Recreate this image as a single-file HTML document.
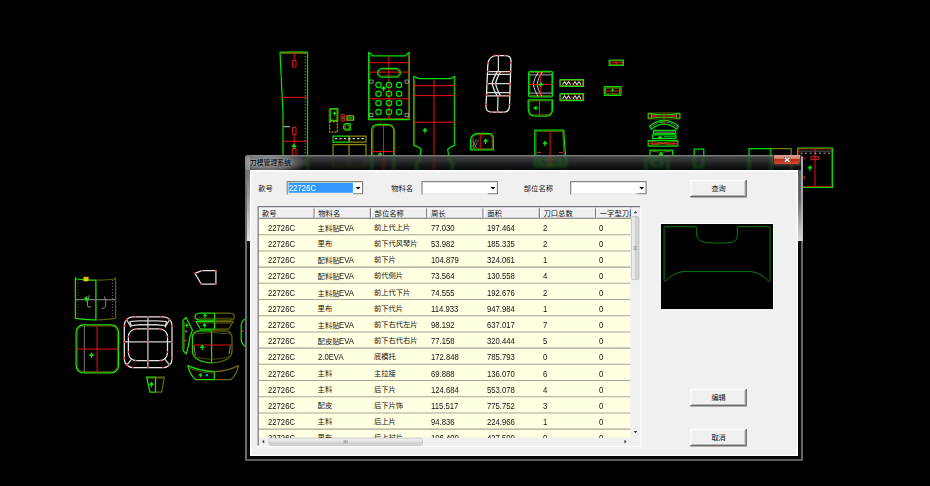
<!DOCTYPE html>
<html lang="zh-CN"><head><meta charset="utf-8"><title>刀模管理系统</title>
<style>
html,body{margin:0;padding:0;background:#000;}
body{width:930px;height:486px;overflow:hidden;position:relative;font-family:"Liberation Sans","Noto Sans CJK SC",sans-serif;font-size:7.3px;color:#111;}
i{font-style:normal;font-size:8.4px;display:inline-block;transform:scaleX(.92);transform-origin:0 50%;}
#cad{position:absolute;left:0;top:0;}
#frame{position:absolute;left:245.0px;top:155.0px;width:558.20px;height:306.00px;border-radius:3px 3px 1px 1px;overflow:hidden;background:#08080a;}
#glass{position:absolute;left:0;top:0;right:0;bottom:0;background:linear-gradient(to bottom,#8e9092 0,#6a6c6e 1px,#3c3e40 2px,#2c2d2f 6px,#141516 11px,#0a0a0b 15px) left top/100% 15px no-repeat;}
#glass b{position:absolute;display:block;}
#g1{left:0;top:1px;bottom:0;width:1.9px;background:#6a6e72;}
#g2{left:1.9px;top:2px;width:3.1px;height:84px;background:linear-gradient(to bottom,#7e8286 0,#74787c 18%,#e2e2e2 100%);}
#g3{right:2.2px;top:15px;width:2.8px;height:71px;background:linear-gradient(to bottom,#5a5e62 0,#62666a 40%,#dcdcdc 100%);}
#g4{right:0;top:2px;width:2.2px;height:84px;background:linear-gradient(to bottom,#a4a8ac 0,#a0a4a8 50%,#d0d0d0 100%);}
#g5{right:0;top:86px;bottom:0;width:2.2px;background:#62666a;}
#g6{left:0;right:0;bottom:0;height:1.9px;background:#5c5e62;}
#rsv{position:absolute;left:0;top:0;}
#refl{position:absolute;left:0;top:0;width:80px;height:15px;background:radial-gradient(ellipse 42px 12px at 22px 8px,rgba(176,180,184,.85),rgba(160,164,168,.6) 55%,rgba(120,120,125,0) 100%);}
#ttl{position:absolute;left:4.8px;top:2.7px;font-size:6.9px;line-height:9px;color:#000;font-weight:500;text-shadow:0 0 2px rgba(230,232,236,.8);white-space:nowrap;}
#cls{position:absolute;left:528px;top:0;width:25.6px;height:9.3px;border-radius:0 0 3px 3px;border:0.6px solid #4a2a28;border-top:none;
 background:linear-gradient(to bottom,#dda79b 0,#cc7464 45%,#b92d14 50%,#c8513a 100%);box-shadow:0 0 2px rgba(255,255,255,.35);}
#cls svg{position:absolute;left:10.4px;top:1.9px;}
#client{position:absolute;left:5.00px;top:15.00px;width:548.20px;height:286.40px;background:#f0f0f0;box-shadow:inset 1.4px 1.4px 0 #fff,inset -1.4px -1.4px 0 #fff;}
.lb{position:absolute;top:13.6px;line-height:10px;white-space:nowrap;}
#csv{position:absolute;left:0;top:0;}
.ct{position:absolute;top:12.9px;line-height:11.4px;color:#fff;white-space:nowrap;}
.btn{position:absolute;left:440.3px;width:56.6px;height:17.5px;text-align:center;line-height:17.6px;font-size:7.2px;}
#pv{position:absolute;width:112.2px;height:85.7px;background:#000;box-shadow:0 -1px 0 #fff,1px 0 0 #fff;}
#pv svg{position:absolute;left:0;top:0;}
#lv{position:absolute;left:7px;top:36px;width:386px;height:242px;overflow:hidden;}
#lsv{position:absolute;left:0;top:0;}
#hd{position:absolute;left:0;top:2.6px;width:374px;height:10.4px;overflow:hidden;}
.hc{position:absolute;top:0;height:10.4px;line-height:10.6px;white-space:nowrap;overflow:hidden;}
#rows{position:absolute;left:1.8px;top:13px;width:371.5px;height:218.5px;overflow:hidden;}
.r{position:absolute;left:0;width:100%;height:16.2px;}
.r span{position:absolute;top:4px;line-height:10px;white-space:nowrap;}
</style></head>
<body>
<svg id="cad" width="930" height="486" viewBox="0 0 930 486" fill="none" stroke-width="1.25" stroke-linejoin="round">
<defs><path id="a" d="M0 -3 L2.6 0.6 H0.6 V2.7 H-0.6 V0.6 H-2.6 Z" fill="#00e800" stroke="none"/></defs>
<!-- tall strip -->
<g>
<path d="M280 52 H307.5 V160 H283 V114 Z" stroke="#00e000"/>
<path d="M281.2 53 H306.4" stroke="#8a8a00"/>
<path d="M281.6 97.3 H307.5 M283 141.2 H307.5 M294.2 52 V60.5 M294.2 134.5 V148 M281.6 70 V78 M283.2 120 V127" stroke="#f01010" stroke-width="1"/>
<rect x="292.6" y="60.5" width="3.4" height="6.6" stroke="#f01010" stroke-width="1"/><rect x="292.6" y="127.5" width="3.4" height="7" stroke="#f01010" stroke-width="1"/><rect x="292.6" y="148.5" width="3.4" height="8" stroke="#f01010" stroke-width="1"/>
<path d="M283.4 126.6 H290" stroke="#aaa"/>
<path d="M305.2 53 V156" stroke="#9a9a9a" stroke-width=".8" stroke-dasharray="1.4 1.6"/>
<use href="#a" x="294" y="146.4"/>
</g>
<!-- small group -->
<g>
<rect x="330.2" y="108.6" width="7.6" height="11.8" stroke="#00e000"/><rect x="329.2" y="109.6" width="7.6" height="11.6" stroke="#8a8a00" stroke-width=".8"/>
<use href="#a" x="334.6" y="113.6" transform="translate(334.6 113.6) scale(.75) translate(-334.6 -113.6)"/>
<rect x="329.6" y="121.6" width="7.8" height="10.6" stroke="#9a9a30" stroke-dasharray="2 1.2"/>
<rect x="341" y="114.6" width="3.4" height="6.4" stroke="#f01010" stroke-width="1"/><rect x="342" y="116.6" width="1.4" height="2.4" stroke="#8a8a00" stroke-width=".7"/>
<rect x="347" y="115.8" width="6.6" height="4.4" stroke="#a0b000"/><path d="M348 118 H352.6" stroke="#00e000"/>
<path d="M350.2 123.6 H345.4 Q341.4 127 345.4 130.2 H350.2 Z" stroke="#00e000"/><path d="M349 125 H346 Q343.6 127 346 129 H349 Z" stroke="#a0a000" stroke-width=".8"/>
<rect x="333" y="136" width="16" height="6" stroke="#00e000"/><rect x="349" y="136" width="17" height="6" stroke="#8a8a00"/>
<path d="M335 138.6 H364" stroke="#ccc" stroke-dasharray="2.4 2"/>
<path d="M333 160 V144.6 H366 V160 M349 144.6 V160" stroke="#8a8a00"/>
</g>
<!-- keypad piece -->
<g>
<path d="M368.6 52.3 L372.6 55.8 H405.4 L409.2 52.3 V119.5 H368.6 Z" stroke="#00e000"/>
<path d="M369.6 54.5 V118.5 H408.4 V54.5" stroke="#7a7a00" stroke-width=".7"/>
<path d="M368.6 62.7 H409.4 M368.6 72.1 H409.4 M368.6 98.8 H409.4 M388.9 56 V119.5" stroke="#f01010" stroke-width="1"/>
<path d="M381 68.4 H397 L400.2 71 V74.6 L397 77.2 H381 L377.8 74.6 V71 Z" stroke="#00e000" stroke-width="1.2"/>
<path d="M381.4 69.6 H396.6 L399 71.4 V74.2 L396.6 76 H381.4 L379 74.2 V71.4 Z" stroke="#8a8a00" stroke-width=".6"/>
<g stroke="#00e000">
<circle cx="378.5" cy="85" r="2.7"/><circle cx="388.9" cy="85" r="2.7"/><circle cx="399" cy="85" r="2.7"/>
<circle cx="378.5" cy="93.7" r="2.7"/><circle cx="388.9" cy="93.7" r="2.7"/><circle cx="399" cy="93.7" r="2.7"/>
<circle cx="378.5" cy="103" r="2.7"/><circle cx="388.9" cy="103" r="2.7"/><circle cx="399" cy="103" r="2.7"/>
<circle cx="378.5" cy="112.1" r="2.7"/><circle cx="388.9" cy="112.1" r="2.7"/><circle cx="399" cy="112.1" r="2.7"/>
</g>
<g stroke="#b0b0b0" stroke-width=".8"><rect x="369.6" y="80" width="3.4" height="3.2"/><rect x="405" y="80" width="3.4" height="3.2"/><rect x="369.6" y="113.4" width="3.4" height="3.2"/><rect x="405" y="113.4" width="3.4" height="3.2"/></g>
<use href="#a" x="383.6" y="88.6"/>
</g>
<!-- arch -->
<g>
<path d="M371.6 160 V131 Q371.6 124.4 378.2 124.4 H387.4 Q393.8 124.4 393.8 131 V160" stroke="#00e000"/>
<path d="M372.8 160 V131.4 Q372.8 125.6 378.4 125.6 H388.4 Q394.8 125.6 394.8 132 V160" stroke="#8a8a00" stroke-width=".8"/>
<path d="M383.5 124.4 V160 M371.6 151.6 H393.8" stroke="#f01010" stroke-width="1"/>
<use href="#a" x="380" y="155"/>
</g>
<!-- tall piece with feet -->
<g>
<path d="M420.6 160 Q420 151 421.4 149.8 Q419 146.6 413.8 145.4 V76.4 L418.6 78.5 H450.4 L454.7 76.4 V145.4 Q449.8 146.6 447.4 149.8 Q448.8 151 448.2 160" stroke="#00e000"/>
<path d="M414.8 79.6 V144.6 M454 79.6 V144.6" stroke="#7a7a00" stroke-width=".7"/>
<path d="M413.8 85.7 H455 M413.8 95.6 H455 M413.8 122.2 H455 M434 79.3 V160" stroke="#f01010" stroke-width="1"/>
<use href="#a" x="425" y="130.6"/>
</g>
<!-- white rounded piece -->
<g stroke="#f4f4f4">
<path d="M497 55.5 H505.4 Q511.2 55.5 511 61.4 L509.5 106 Q509.3 112.1 503.5 112.1 H492 Q485.8 112.1 486 106 L487.8 65 Q488.4 55.8 497 55.5 Z"/>
<path d="M487.7 71.6 H510.8 M487.6 74.4 H510.7 M487.2 83.5 H510.3 M486.8 92.6 H510 M486.7 95.8 H509.9 M498.4 55.5 V71.6 M498 95.8 L497.6 112.1" stroke="#d8d8d8"/>
<path d="M497.4 71.6 Q493 78.5 492.2 83.6 Q493 88.5 497.2 95.8 M500.6 71.6 Q496.4 78.5 495.6 83.6 Q496.4 88.5 500.4 95.8" stroke="#e8e8e8"/>
</g>
<g fill="#ff2020" stroke="none">
<circle cx="498.6" cy="55.3" r=".9"/><circle cx="505" cy="55.4" r=".9"/><circle cx="494" cy="55.4" r=".9"/><circle cx="488.1" cy="63" r=".9"/><circle cx="511" cy="63" r=".9"/>
<circle cx="487.9" cy="71.6" r=".9"/><circle cx="510.7" cy="71.6" r=".9"/><circle cx="487.4" cy="84" r=".9"/><circle cx="510.3" cy="84" r=".9"/><circle cx="486.9" cy="95" r=".9"/><circle cx="510" cy="95" r=".9"/>
<circle cx="486.2" cy="104.6" r=".9"/><circle cx="509.5" cy="104.6" r=".9"/><circle cx="492" cy="112" r=".9"/><circle cx="497.2" cy="112" r=".9"/><circle cx="503.6" cy="112" r=".9"/>
<circle cx="499.2" cy="72.8" r=".8"/><circle cx="503" cy="72.8" r=".8"/><circle cx="499" cy="96.3" r=".8"/><circle cx="502.6" cy="96.3" r=".8"/><circle cx="495" cy="84" r=".8"/>
</g>
<!-- E chevron -->
<g>
<rect x="528.6" y="71.4" width="24" height="25.4" rx="1.5" stroke="#00e000"/><rect x="529.8" y="72.6" width="21.6" height="23" rx="1" stroke="#8a8a00" stroke-width=".7"/>
<path d="M529 74.8 H552 M529 93.2 H552" stroke="#888"/>
<path d="M538.2 72 Q534 79 533.2 84.4 Q534 89.5 538 96.4 M542 72 Q537.8 79 537 84.4 Q537.8 89.5 541.8 96.4" stroke="#d8d8d8" stroke-width=".9"/>
<path d="M528.6 84.4 H552.6 M540.2 71.4 V96.8" stroke="#f01010" stroke-width="1"/>
<use href="#a" x="0" y="0" transform="translate(541 84.4) rotate(-90)"/>
</g>
<!-- F -->
<g>
<path d="M528.2 99.8 H552.6 V109 Q552.6 116 546 116 H534.8 Q528.2 116 528.2 109 Z" stroke="#00e000"/>
<path d="M529.3 100.9 H551.5 V109 Q551.5 114.9 546 114.9 H534.8 Q529.3 114.9 529.3 109 Z" stroke="#8a8a00" stroke-width=".7"/>
<path d="M539.5 99.8 V116" stroke="#f01010" stroke-width="1"/><use href="#a" x="0" y="0" transform="translate(536 108) rotate(-90)"/>
</g>
<!-- G hatch rects -->
<g>
<rect x="560" y="79.5" width="23.5" height="6.9" stroke="#30d020"/><rect x="560" y="93.6" width="23.5" height="6.9" stroke="#30d020"/>
<rect x="560.9" y="80.4" width="21.7" height="5.1" stroke="#9a9a00" stroke-width=".6"/><rect x="560.9" y="94.5" width="21.7" height="5.1" stroke="#9a9a00" stroke-width=".6"/>
<path d="M562.5 84.8 L564.5 81.6 L566.5 84.8 L568.5 81.6 L570.5 84.8 M573 84.8 L575 81.6 L577 84.8 L579 81.6 L581 84.8 M562.5 98.9 L564.5 95.7 L566.5 98.9 L568.5 95.7 L570.5 98.9 M573 98.9 L575 95.7 L577 98.9 L579 95.7 L581 98.9" stroke="#d0d0d0" stroke-width="1.1"/>
<path d="M570.5 83 H573.5 M570.5 97.1 H573.5" stroke="#ff4040" stroke-width=".8"/>
</g>
<!-- H dome -->
<g>
<path d="M470.4 149.9 V142 Q470.4 133.3 479 133.3 H488 Q493.3 133.3 493.3 138.6 V149.9 Z" stroke="#00e000"/>
<path d="M471.6 148.8 V142 Q471.6 134.5 479 134.5 H488 Q492.2 134.5 492.2 138.6 V148.8 Z" stroke="#8a8a00" stroke-width=".7"/>
<path d="M472.4 147 L476.4 139 M474.4 148 L478.4 140 M472.6 141 L476.6 148" stroke="#999" stroke-width=".7"/>
<path d="M480.2 133.3 V149.9" stroke="#f01010" stroke-width="1"/><path d="M473.4 138.5 V149" stroke="#ff3030" stroke-width=".7"/><use href="#a" x="485.6" y="141.2"/>
</g>
<!-- I trapezoid -->
<g>
<path d="M534.8 130.1 H563.7 L565.8 160 H534.8 Z" stroke="#00e000"/><path d="M536 131.3 H562.6 L564.6 160 M536 131.3 V160" stroke="#8a8a00" stroke-width=".7"/>
<path d="M550.1 130.1 V160" stroke="#f01010" stroke-width="1"/><use href="#a" x="545" y="143.6"/>
<path d="M537 152.4 H541 M559 152.4 H563" stroke="#ff4040" stroke-width=".8"/>
</g>
<!-- J K -->
<g>
<rect x="609.2" y="60.2" width="14.1" height="5.2" stroke="#00e000"/><rect x="610.2" y="61.1" width="12.1" height="3.4" stroke="#8a8a00" stroke-width=".6"/><path d="M609.2 62.8 H623.3 M616.2 60.2 V65.4" stroke="#ff2020" stroke-width=".8"/>
<rect x="604.3" y="86.7" width="16.7" height="8.6" stroke="#00e000"/><rect x="605.6" y="88" width="14.1" height="6" stroke="#b0b000" stroke-width=".8"/><path d="M604.3 91 H621" stroke="#ff2020" stroke-width=".9"/>
<use href="#a" x="612.6" y="90.4" transform="translate(612.6 90.4) scale(.7) translate(-612.6 -90.4)"/>
</g>
<!-- L stack -->
<g>
<path d="M648.2 113.4 Q664 116.4 679.9 113.4 V118.6 Q664 115.6 648.2 118.6 Z" stroke="#00e000"/><rect x="648.8" y="113" width="30.5" height="6" stroke="#7a8a00" stroke-width=".7"/>
<path d="M650.6 114.2 Q664 116.8 677.4 114.2 V117.8 Q664 115.2 650.6 117.8 Z" fill="#b81414" stroke="none"/><path d="M664 113 V119" stroke="#ff2020" stroke-width=".8"/><path d="M651.4 113.8 V118.2 M676.6 113.8 V118.2" stroke="#c8a0a0" stroke-width=".7"/>
<path d="M649.6 126 Q664 114.6 678.5 126 L676.8 129.3 Q664 119.1 651.3 129.3 Z" stroke="#00e000"/><path d="M651 126.8 Q664 116.6 677 126.8" stroke="#8a7090" stroke-width=".8"/><path d="M658 122.2 L662.6 120.8 V123.4 Z" fill="#00c000" stroke="none"/>
<path d="M664 120.3 V124.2" stroke="#ff2020"/>
<rect x="653.4" y="130.4" width="22.2" height="3.2" stroke="#00e000"/><path d="M654.4 132 H674.6" stroke="#d0d0d0" stroke-width=".7"/>
<rect x="652.6" y="134.8" width="23.4" height="3.9" stroke="#00e000"/><path d="M657 138.2 L660 135.4 L663 138.2 Z" fill="#00e000" stroke="none"/><path d="M664 136.8 H675" stroke="#00c000"/>
<rect x="648.2" y="140.5" width="29.5" height="5.7" stroke="#00e000"/><path d="M649.2 141.4 Q663 144.4 676.7 141.4 M649.2 145.3 Q663 142.3 676.7 145.3" stroke="#9a9a00" stroke-width=".7"/><path d="M648.2 143.4 H677.7 M652 140.8 V146 M674 140.8 V146" stroke="#ff2020" stroke-width=".8"/>
<path d="M650 160 V150 H672.6 V160" stroke="#00e000"/><path d="M651 151 Q661 153.6 671.6 151" stroke="#9a9a00" stroke-width=".7"/><use href="#a" x="661" y="154.6"/>
<path d="M694.2 160 V149.2 H703.8 V160" stroke="#00e000"/>
</g>
<!-- right rects -->
<g>
<path d="M749 160 V148.6 H770.9 V160" stroke="#00e000"/><path d="M770.9 148.6 H791.2 V160" stroke="#7a7a00"/>
<rect x="797.8" y="148" width="34.7" height="39.3" stroke="#00e000"/><rect x="798.7" y="148.9" width="32.9" height="37.5" stroke="#ff1010" stroke-width=".7"/><path d="M799 151.1 H831.5" stroke="#999" stroke-width=".6"/>
<path d="M815 148 V187.3" stroke="#f01010" stroke-width="1"/><path d="M800.5 153.2 H831" stroke="#e0e0e0" stroke-dasharray="2 2.6" stroke-width=".8"/>
<rect x="810.8" y="156.8" width="8.2" height="2.6" stroke="#ff3030" stroke-width=".8"/><path d="M804.2 156.6 V159.6 M804.2 176 V179.6" stroke="#ff3030" stroke-width=".8"/>
<use href="#a" x="810" y="168"/>
</g>
<!-- M -->
<g>
<path d="M95.9 280 Q86 280.4 76.4 279 L75.4 277.8 V318.4 Q86 320 95.9 319.8 Z" stroke="#20e000"/>
<path d="M95.9 280 Q106 280.4 114.6 279 L115.6 277.8 V318.4 Q106 320 95.9 319.8" stroke="#5c5c00"/>
<path d="M77.8 280 V318" stroke="#e03030" stroke-dasharray=".8 2.2" stroke-width=".9"/><path d="M112.6 280 V318" stroke="#888" stroke-dasharray=".8 2.2" stroke-width=".9"/>
<path d="M76 299.6 H115" stroke="#777"/>
<path d="M89.2 296.4 Q87 301 87.4 305.8 Q88 307.6 90.2 307.4 M104.4 296.4 Q106.6 301 105.6 306.6 Q104.6 308.6 101.8 308.4" stroke="#999" stroke-width=".9"/>
<circle cx="89" cy="296" r=".8" fill="#ff3030"/><circle cx="90" cy="306.4" r=".8" fill="#ff3030"/>
<rect x="83.8" y="277.2" width="4.4" height="3.8" fill="#e8c000" stroke="#f0d800" stroke-width=".6"/>
<use href="#a" x="86.2" y="299"/>
</g>
<!-- N -->
<g>
<rect x="76.1" y="324.8" width="42.5" height="48.1" rx="7.5" stroke="#20e000"/><rect x="77.3" y="326" width="40.1" height="45.7" rx="6.5" stroke="#7a7a00" stroke-width=".7"/>
<path d="M84.3 325.6 V372.2" stroke="#999" stroke-width=".8"/>
<path d="M97.1 324.8 V372.9 M76.1 349 H118.6" stroke="#f01010" stroke-width="1"/>
<use href="#a" x="91.6" y="355.4"/>
</g>
<!-- O -->
<g stroke="#e8e8e8">
<rect x="124.3" y="316.9" width="47.7" height="50.6" rx="8.5"/>
<rect x="128.4" y="328.8" width="39.1" height="31.9" rx="8"/>
<path d="M129.6 321.6 Q148 319.6 166.8 321.6 M131.2 325.6 Q148 323.4 165.2 325.6 M147.9 316.9 V367.5 M124.3 341.8 H172 M126.4 319.4 L131.2 327.4 M169.8 319.4 L165 327.4 M126.8 365 L132 358.6 M169.6 365 L164.4 358.6 M129.6 321.6 L131.2 325.6 M166.8 321.6 L165.2 325.6" stroke="#cfcfcf"/>
</g>
<g fill="#ff2020" stroke="none">
<circle cx="147.9" cy="316.9" r=".9"/><circle cx="135" cy="317" r=".9"/><circle cx="161" cy="317" r=".9"/><circle cx="124.4" cy="326" r=".9"/><circle cx="172" cy="326" r=".9"/><circle cx="124.3" cy="341.8" r=".9"/><circle cx="172" cy="341.8" r=".9"/>
<circle cx="124.4" cy="358" r=".9"/><circle cx="172" cy="358" r=".9"/><circle cx="133" cy="367.4" r=".9"/><circle cx="147.9" cy="367.5" r=".9"/><circle cx="163" cy="367.4" r=".9"/>
<circle cx="128.5" cy="336.6" r=".9"/><circle cx="167.4" cy="336.6" r=".9"/><circle cx="136" cy="328.9" r=".9"/><circle cx="160" cy="328.9" r=".9"/><circle cx="147.9" cy="328.8" r=".9"/><circle cx="147.9" cy="360.7" r=".9"/><circle cx="135.6" cy="360.6" r=".9"/><circle cx="160.4" cy="360.6" r=".9"/>
<circle cx="128.5" cy="352" r=".9"/><circle cx="167.4" cy="352" r=".9"/><circle cx="147.9" cy="341.8" r=".9"/><circle cx="126.6" cy="319.6" r=".9"/><circle cx="169.6" cy="319.6" r=".9"/><circle cx="127" cy="365" r=".9"/><circle cx="169.4" cy="365" r=".9"/>
</g>
<!-- P -->
<g>
<path d="M155.5 377 H146.6 L150 392.2 H155.5 Z" stroke="#20e000"/><path d="M155.5 377 H164.4 L161.6 392.2 H155.5" stroke="#6a6a00"/>
<path d="M147.8 378.2 H163.2" stroke="#7a7a00" stroke-width=".7"/><use href="#a" x="151.4" y="384.6"/>
</g>
<!-- Q -->
<g>
<path d="M195 273.4 L201.7 270.7 H215.9 V284 H201.2 Z" stroke="#e4e4e4"/>
<g fill="#ff2020" stroke="none"><circle cx="195" cy="273.4" r=".9"/><circle cx="201.7" cy="270.7" r=".9"/><circle cx="215.9" cy="270.7" r=".9"/><circle cx="215.9" cy="284" r=".9"/><circle cx="201.2" cy="284" r=".9"/></g>
</g>
<!-- R group -->
<g>
<path d="M214.6 313 H200 Q195 313.4 195 316.6 Q195 320 200 320.2 H214.6 Z" stroke="#20e000"/><path d="M214.6 313 H229.4 Q234.4 313.4 234.4 316.6 Q234.4 320 229.4 320.2 H214.6" stroke="#6a6a00"/>
<path d="M197 318.2 H232" stroke="#7a7a00" stroke-width=".7"/><use href="#a" x="205" y="315.8" transform="translate(205 315.8) scale(.85) translate(-205 -315.8)"/>
<path d="M214.6 321.5 H195.9 L200.4 329 H214.6 Z" stroke="#20e000"/><path d="M214.6 321.5 H233.3 L228.6 329 H214.6" stroke="#6a6a00"/>
<path d="M198 323 H231" stroke="#7a7a00" stroke-width=".7"/><use href="#a" x="204.4" y="325.4" transform="translate(204.4 325.4) scale(.85) translate(-204.4 -325.4)"/>
<path d="M211.6 330.9 H199 Q192.4 331.5 192.4 338 V352 Q193.4 361.4 211.6 363 Z" stroke="#20e000"/><path d="M211.6 330.9 H225.4 Q232 331.5 232 338 V352 Q231 361.4 211.6 363" stroke="#6a6a00"/>
<path d="M194 334 Q212 331 230.4 334 M195 356.6 Q212 362 229 356.6" stroke="#6a6a00" stroke-width=".7"/>
<path d="M192.4 345 H232" stroke="#f01010" stroke-width="1"/><path d="M194 345.6 L195.2 354.4 M230.4 345.6 L229 354.4" stroke="#aaa" stroke-width=".8"/>
<circle cx="195.2" cy="354.6" r=".8" fill="#ff3030"/><use href="#a" x="202.2" y="347.4"/>
<path d="M183 320.4 L186 317.5 L192.4 330 Q189 338 188.6 345 L186.2 354 L183 350.4 Z" stroke="#20e000"/><path d="M184.4 321.6 V349.6" stroke="#7a7a00" stroke-width=".7"/>
<path d="M183 340.6 H187" stroke="#ff3030" stroke-width=".8"/>
<use href="#a" x="186.8" y="325.6" transform="translate(186.8 325.6) scale(.8) translate(-186.8 -325.6)"/><circle cx="186" cy="331.6" r="1" fill="#00d8d8"/>
<path d="M214.3 371.6 Q200 371 187.8 365.6 Q190 375 195.4 379.5 H214.3 Z" stroke="#20e000"/><path d="M214.3 371.6 Q228 371 238.6 365.6 Q236.4 375 231 379.5 H214.3" stroke="#6a6a00"/>
<path d="M189.8 368.4 Q201 373 213 373.2" stroke="#7a7a00" stroke-width=".7"/>
<use href="#a" x="200.4" y="375.2" transform="translate(200.4 375.2) scale(.85) translate(-200.4 -375.2)"/><circle cx="206.8" cy="375.2" r="1.1" fill="#00d8d8"/>
<circle cx="198" cy="379.4" r=".8" fill="#ff3030"/>
<path d="M248 318 Q241.6 319.6 241.2 325 V340 Q241.6 345.4 248 347.4" stroke="#20e000"/><path d="M241.2 331 H243.6" stroke="#ff3030"/>
</g>
</svg>
<div id="frame"><div id="glass"><b id="g1"></b><b id="g2"></b><b id="g3"></b><b id="g4"></b><b id="g5"></b><b id="g6"></b></div><svg id="rsv" width="558.2" height="15" viewBox="245 155 558.2 15" fill="none"><defs><filter id="bl" x="-5%" y="-50%" width="110%" height="200%"><feGaussianBlur stdDeviation="1.4"/></filter></defs><g filter="url(#bl)" opacity=".36" stroke-width="1.7"><path d="M333 155 V166 H366 V155 M349 155 V166" stroke="#6a6a00" opacity=".6"/><path d="M307.5 155 V171" stroke="#18d018" opacity=".8"/><path d="M371.6 155 V171 M393.8 155 V171 M420.6 155 Q420 160 417 163 Q415 166 418 171 M448.2 155 Q449 160 452 163 Q454 166 451 171 M534.8 155 V166.5 H565.8 V155 M539 159 H561 V164 H539 Z M646 171 V157 H668 V171 M652 160 H662 V166 H652 Z M694.2 155 V167 H703 V155 M749 155 V171 M770.9 155 V171" stroke="#18d018"/><path d="M383.5 155 V171 M434 155 V171 M550.1 155 V166" stroke="#e01818"/><path d="M791.2 155 V171" stroke="#8a8a00"/></g></svg><div id="refl"></div><div id="ttl">刀模管理系统</div><div id="cls"><svg width="6.4" height="5.6" viewBox="0 0 6.4 5.6"><path d="M1.4 1.2 L5 4.4 M5 1.2 L1.4 4.4" stroke="#5a3a3a" stroke-width="2.3" stroke-linecap="square"/><path d="M1.4 1.2 L5 4.4 M5 1.2 L1.4 4.4" stroke="#fff" stroke-width="1.4" stroke-linecap="square"/></svg></div>
<div id="client">
<svg id="csv" width="548.2" height="286.4" viewBox="250 170 548.2 286.4" fill="none"><g transform="translate(0.0 0)"><rect x="286.6" y="181.1" width="76.6" height="13.3" fill="#fff"/><rect x="288.5" y="182.7" width="64.4" height="10.1" fill="#3399ff"/><path d="M287.2 194.4 V181.1 M286.6 181.65 H363.2" stroke="#88827c" stroke-width="1.2"/><path d="M287.8 193.9 H353" stroke="#e0e0e0" stroke-width="1"/><path d="M362.6 182.2 V194.3 M353 193.8 H363.2" stroke="#787878" stroke-width="1.1"/><path d="M355.7 186.9 H360.6 L358.15 189.5 Z" fill="#000"/></g><g transform="translate(134.8 0)"><rect x="286.6" y="181.1" width="76.6" height="13.3" fill="#fff"/><path d="M287.2 194.4 V181.1 M286.6 181.65 H363.2" stroke="#88827c" stroke-width="1.2"/><path d="M287.8 193.9 H353" stroke="#e0e0e0" stroke-width="1"/><path d="M362.6 182.2 V194.3 M353 193.8 H363.2" stroke="#787878" stroke-width="1.1"/><path d="M355.7 186.9 H360.6 L358.15 189.5 Z" fill="#000"/></g><g transform="translate(283.5 0)"><rect x="286.6" y="181.1" width="76.6" height="13.3" fill="#fff"/><path d="M287.2 194.4 V181.1 M286.6 181.65 H363.2" stroke="#88827c" stroke-width="1.2"/><path d="M287.8 193.9 H353" stroke="#e0e0e0" stroke-width="1"/><path d="M362.6 182.2 V194.3 M353 193.8 H363.2" stroke="#787878" stroke-width="1.1"/><path d="M355.7 186.9 H360.6 L358.15 189.5 Z" fill="#000"/></g><rect x="690.3" y="179.9" width="56.6" height="17.5" fill="#f0f0f0"/><path d="M690.90 196.40 V180.50 H745.90" stroke="#fff" stroke-width="1.2"/><path d="M745.00 181.10 V195.50 H691.50" stroke="#b0b0b0" stroke-width="1"/><path d="M746.20 179.90 V196.70 H690.30" stroke="#6c6c6c" stroke-width="1.4"/><rect x="690.3" y="389.0" width="56.6" height="17.5" fill="#f0f0f0"/><path d="M690.90 405.50 V389.60 H745.90" stroke="#fff" stroke-width="1.2"/><path d="M745.00 390.20 V404.60 H691.50" stroke="#b0b0b0" stroke-width="1"/><path d="M746.20 389.00 V405.80 H690.30" stroke="#6c6c6c" stroke-width="1.4"/><rect x="690.3" y="429.0" width="56.6" height="17.5" fill="#f0f0f0"/><path d="M690.90 445.50 V429.60 H745.90" stroke="#fff" stroke-width="1.2"/><path d="M745.00 430.20 V444.60 H691.50" stroke="#b0b0b0" stroke-width="1"/><path d="M746.20 429.00 V445.80 H690.30" stroke="#6c6c6c" stroke-width="1.4"/></svg>
<div class="lb" style="left:8.3px">款号</div><div class="ct" style="left:38.9px"><i>22726C</i></div>
<div class="lb" style="left:141.2px">物料名</div><div class="lb" style="left:273.8px">部位名称</div>
<div class="btn" style="top:9.9px">查询</div>
<div class="btn" style="top:219.0px">编辑</div>
<div class="btn" style="top:259.0px">取消</div>
<div id="pv" style="left:410.9px;top:53.6px"><svg width="112.2" height="85.7" viewBox="660.9 223.6 112.2 85.7"><path d="M664.6 226.3 H695.6 Q696.6 226.3 696.6 227.4 V234.6 Q697.2 240.6 704.6 241.8 Q720 243.8 732.6 241.6 Q737.2 240.2 737.2 234.6 V227.4 Q737.2 226.3 738.2 226.3 H769 Q770 226.3 770 227.4 V280.3 L769 281.3 Q760 272 750.9 271.2 H682.9 Q673 272.5 665.2 280.9 L664 279.9 V227.4 Q664 226.3 664.6 226.3 Z" fill="none" stroke="#0a7d0a" stroke-width="1"/></svg></div>
<div id="lv">
<svg id="lsv" width="386" height="242" viewBox="257 206 386 242" fill="none"><path d="M640.9 206.1 V446.3 M257.6 446.3 H641.5" stroke="#fff" stroke-width="1.2"/><rect x="258.8" y="207.3" width="381.5" height="238.4" fill="#f0f0f0"/><rect x="258.8" y="218.8" width="371.5" height="218.7" fill="#ffffe1"/><path d="M258.8 234.70 H630.3 M258.8 250.90 H630.3 M258.8 267.10 H630.3 M258.8 283.30 H630.3 M258.8 299.50 H630.3 M258.8 315.70 H630.3 M258.8 331.90 H630.3 M258.8 348.10 H630.3 M258.8 364.30 H630.3 M258.8 380.50 H630.3 M258.8 396.70 H630.3 M258.8 412.90 H630.3 M258.8 429.10 H630.3" stroke="#a8a796" stroke-width="1.05"/><path d="M258.8 218.25 H631 " stroke="#747474" stroke-width="1.1"/><path d="M314.15 207.3 V217.7 M370.45 207.3 V217.7 M426.75 207.3 V217.7 M483.05 207.3 V217.7 M539.35 207.3 V217.7 M595.65 207.3 V217.7" stroke="#7a7a7a" stroke-width="1.25"/><path d="M315.30 207.3 V217.7 M371.60 207.3 V217.7 M427.90 207.3 V217.7 M484.20 207.3 V217.7 M540.50 207.3 V217.7 M596.80 207.3 V217.7 M259.4 207.3 V217.7 M258.8 207.8 H631" stroke="#fff" stroke-width="1.1"/><path d="M630.6 207.3 V217.7" stroke="#9a9a9a" stroke-width=".8"/><path d="M258.2 206.1 V445.7 M257.6 206.7 H640.3" stroke="#76767e" stroke-width="1.2"/><defs><linearGradient id="gv" x1="0" x2="1" y1="0" y2="0"><stop offset="0" stop-color="#f2f2f2"/><stop offset=".45" stop-color="#e4e4e4"/><stop offset=".55" stop-color="#cfcfcf"/><stop offset="1" stop-color="#d8d8d8"/></linearGradient><linearGradient id="gh" x1="0" x2="0" y1="0" y2="1"><stop offset="0" stop-color="#f2f2f2"/><stop offset=".45" stop-color="#e4e4e4"/><stop offset=".55" stop-color="#cfcfcf"/><stop offset="1" stop-color="#d8d8d8"/></linearGradient></defs><rect x="631.5" y="216.6" width="7.5" height="63" rx="1.8" fill="url(#gv)" stroke="#b4b4b4" stroke-width=".6"/><path d="M633.6 246.6 H637 M633.6 248.1 H637 M633.6 249.6 H637" stroke="#8a8a8a" stroke-width=".7"/><rect x="268.9" y="438.1" width="153.6" height="7.3" rx="1.8" fill="url(#gh)" stroke="#b4b4b4" stroke-width=".6"/><path d="M344.2 440 V443.4 M345.7 440 V443.4 M347.2 440 V443.4" stroke="#8a8a8a" stroke-width=".7"/><path d="M633.7 213.3 L635.5 211.1 L637.3 213.3 Z M633.7 431 L635.5 433.2 L637.3 431 Z M264.2 439.8 L262 441.6 L264.2 443.4 Z M624.4 439.8 L626.6 441.6 L624.4 443.4 Z" fill="#3a3a3a"/></svg>
<div id="hd"><div class="hc" style="left:5.0px;width:51.3px">款号</div><div class="hc" style="left:61.3px;width:51.3px">物料名</div><div class="hc" style="left:117.6px;width:51.3px">部位名称</div><div class="hc" style="left:173.9px;width:51.3px">周长</div><div class="hc" style="left:230.2px;width:51.3px">面积</div><div class="hc" style="left:286.5px;width:51.3px">刀口总数</div><div class="hc" style="left:342.8px;width:31.4px">一字型刀口</div></div>
<div id="rows">
<div class="r" style="top:-0.20px"><span style="left:9.2px"><i>22726C</i></span><span style="left:58.8px">主料贴<i>EVA</i></span><span style="left:115.1px">前上代上片</span><span style="left:172.0px"><i>77.030</i></span><span style="left:228.3px"><i>197.464</i></span><span style="left:284.1px"><i>2</i></span><span style="left:340.4px"><i>0</i></span></div>
<div class="r" style="top:16.00px"><span style="left:9.2px"><i>22726C</i></span><span style="left:58.8px">里布</span><span style="left:115.1px">前下代风琴片</span><span style="left:172.0px"><i>53.982</i></span><span style="left:228.3px"><i>185.335</i></span><span style="left:284.1px"><i>2</i></span><span style="left:340.4px"><i>0</i></span></div>
<div class="r" style="top:32.20px"><span style="left:9.2px"><i>22726C</i></span><span style="left:58.8px">配料贴<i>EVA</i></span><span style="left:115.1px">前下片</span><span style="left:172.0px"><i>104.879</i></span><span style="left:228.3px"><i>324.061</i></span><span style="left:284.1px"><i>1</i></span><span style="left:340.4px"><i>0</i></span></div>
<div class="r" style="top:48.40px"><span style="left:9.2px"><i>22726C</i></span><span style="left:58.8px">配料贴<i>EVA</i></span><span style="left:115.1px">前代侧片</span><span style="left:172.0px"><i>73.564</i></span><span style="left:228.3px"><i>130.558</i></span><span style="left:284.1px"><i>4</i></span><span style="left:340.4px"><i>0</i></span></div>
<div class="r" style="top:64.60px"><span style="left:9.2px"><i>22726C</i></span><span style="left:58.8px">主料贴<i>EVA</i></span><span style="left:115.1px">前上代下片</span><span style="left:172.0px"><i>74.555</i></span><span style="left:228.3px"><i>192.676</i></span><span style="left:284.1px"><i>2</i></span><span style="left:340.4px"><i>0</i></span></div>
<div class="r" style="top:80.80px"><span style="left:9.2px"><i>22726C</i></span><span style="left:58.8px">里布</span><span style="left:115.1px">前下代片</span><span style="left:172.0px"><i>114.933</i></span><span style="left:228.3px"><i>947.984</i></span><span style="left:284.1px"><i>1</i></span><span style="left:340.4px"><i>0</i></span></div>
<div class="r" style="top:97.00px"><span style="left:9.2px"><i>22726C</i></span><span style="left:58.8px">主料贴<i>EVA</i></span><span style="left:115.1px">前下右代左片</span><span style="left:172.0px"><i>98.192</i></span><span style="left:228.3px"><i>637.017</i></span><span style="left:284.1px"><i>7</i></span><span style="left:340.4px"><i>0</i></span></div>
<div class="r" style="top:113.20px"><span style="left:9.2px"><i>22726C</i></span><span style="left:58.8px">配皮贴<i>EVA</i></span><span style="left:115.1px">前下右代右片</span><span style="left:172.0px"><i>77.158</i></span><span style="left:228.3px"><i>320.444</i></span><span style="left:284.1px"><i>5</i></span><span style="left:340.4px"><i>0</i></span></div>
<div class="r" style="top:129.40px"><span style="left:9.2px"><i>22726C</i></span><span style="left:58.8px"><i>2.0EVA</i></span><span style="left:115.1px">底模托</span><span style="left:172.0px"><i>172.848</i></span><span style="left:228.3px"><i>785.793</i></span><span style="left:284.1px"><i>0</i></span><span style="left:340.4px"><i>0</i></span></div>
<div class="r" style="top:145.60px"><span style="left:9.2px"><i>22726C</i></span><span style="left:58.8px">主料</span><span style="left:115.1px">主拉接</span><span style="left:172.0px"><i>69.888</i></span><span style="left:228.3px"><i>136.070</i></span><span style="left:284.1px"><i>6</i></span><span style="left:340.4px"><i>0</i></span></div>
<div class="r" style="top:161.80px"><span style="left:9.2px"><i>22726C</i></span><span style="left:58.8px">主料</span><span style="left:115.1px">后下片</span><span style="left:172.0px"><i>124.684</i></span><span style="left:228.3px"><i>553.078</i></span><span style="left:284.1px"><i>4</i></span><span style="left:340.4px"><i>0</i></span></div>
<div class="r" style="top:178.00px"><span style="left:9.2px"><i>22726C</i></span><span style="left:58.8px">配皮</span><span style="left:115.1px">后下片饰</span><span style="left:172.0px"><i>115.517</i></span><span style="left:228.3px"><i>775.752</i></span><span style="left:284.1px"><i>3</i></span><span style="left:340.4px"><i>0</i></span></div>
<div class="r" style="top:194.20px"><span style="left:9.2px"><i>22726C</i></span><span style="left:58.8px">主料</span><span style="left:115.1px">后上片</span><span style="left:172.0px"><i>94.836</i></span><span style="left:228.3px"><i>224.966</i></span><span style="left:284.1px"><i>1</i></span><span style="left:340.4px"><i>0</i></span></div>
<div class="r" style="top:210.40px"><span style="left:9.2px"><i>22726C</i></span><span style="left:58.8px">里布</span><span style="left:115.1px">后上衬片</span><span style="left:172.0px"><i>106.400</i></span><span style="left:228.3px"><i>427.500</i></span><span style="left:284.1px"><i>0</i></span><span style="left:340.4px"><i>0</i></span></div>
</div>
</div>
</div></div>
</body></html>
